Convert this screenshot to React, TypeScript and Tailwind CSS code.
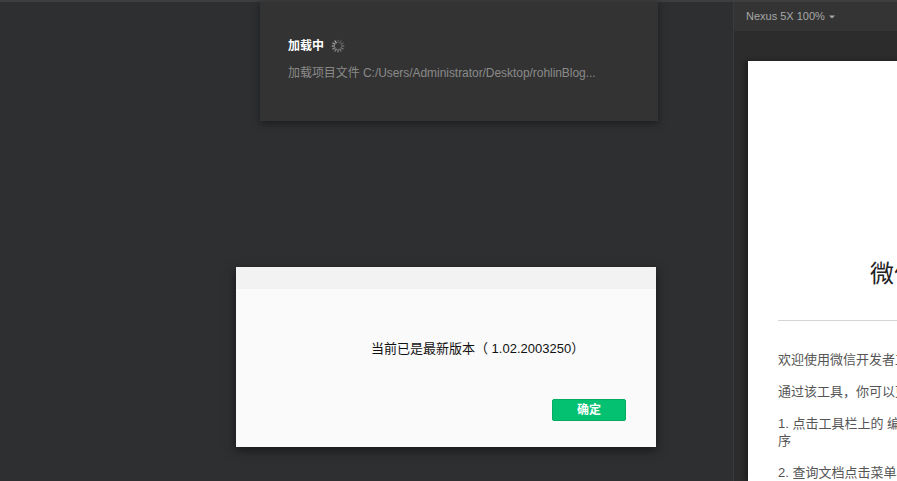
import React from "react";

function Spinner() {
  const ticks = Array.from({ length: 12 });
  return (
    <svg width="14" height="14" viewBox="0 0 14 14" className="ml-[7px]">
      {ticks.map((_, i) => (
        <rect
          key={i}
          x="6.3"
          y="0.5"
          width="1.4"
          height="3.6"
          rx="0.7"
          fill="#bdbdbd"
          opacity={0.25 + (i / 12) * 0.6}
          transform={`rotate(${i * 30} 7 7)`}
        />
      ))}
    </svg>
  );
}

export default function App() {
  const font = { fontFamily: '"Liberation Sans", "Noto Sans CJK SC", sans-serif' };
  return (
    <div className="w-[897px] h-[481px] overflow-hidden bg-[#2e2f31] flex flex-col" style={font}>
      <div className="h-[2px] bg-[#3d3e40] shrink-0" />
      <div className="flex flex-1 min-h-0">
        {/* main area */}
        <div className="relative w-[733px] shrink-0 h-full">
          {/* loading panel */}
          <div className="absolute left-[260px] top-0 w-[398px] h-[119px] bg-[#333333] shadow-[0_2px_8px_rgba(0,0,0,0.45)] pl-[28px] pt-[36px]">
            <div className="flex items-center h-[16px]">
              <span className="text-[12px] font-bold text-white leading-[16px]">加载中</span>
              <Spinner />
            </div>
            <div className="mt-[11px] text-[12px] tracking-[-0.05px] leading-[16px] text-[#8a8a8a]">
              加载项目文件 C:/Users/Administrator/Desktop/rohlinBlog...
            </div>
          </div>
          {/* dialog */}
          <div className="absolute left-[236px] top-[265px] w-[420px] h-[180px] bg-[#fafafa] shadow-[0_3px_10px_rgba(0,0,0,0.55)] flex flex-col">
            <div className="h-[22px] bg-[#f2f2f2] shrink-0" />
            <div className="pl-[135px] pt-[51px] text-[13px] leading-[18px] text-[#111]">
              当前已是最新版本（ 1.02.2003250）
            </div>
            <div className="flex justify-end pr-[30px] mt-[41px]">
              <button className="w-[74px] h-[22px] bg-[#03c171] rounded-[2px] border border-[#05ad62] text-white text-[12px] font-bold leading-[20px]">
                确定
              </button>
            </div>
          </div>
        </div>
        {/* simulator panel */}
        <div className="flex-1 h-full border-l border-[#3b3b3b] bg-[#2c2c2c] flex flex-col min-w-0">
          <div className="h-[29px] bg-[#343434] flex items-center pl-[12px] shrink-0">
            <span className="text-[11px] text-[#a8a8a8]">Nexus 5X 100%</span>
            <svg width="8" height="6" viewBox="0 0 8 6" className="ml-[3px] mt-[1px]">
              <path d="M1 1.5 L4 4.5 L7 1.5 Z" fill="#a8a8a8" />
            </svg>
          </div>
          <div className="flex-1 pl-[14px] pt-[30px] overflow-hidden">
            <div className="w-[412px] h-full bg-white shadow-[-3px_0_5px_rgba(0,0,0,0.35)] px-[30px] pt-[197px]">
              <div className="text-center text-[24px] leading-[32px] text-[#222]">微信开发者工具</div>
              <div className="mt-[30px] h-px bg-[#d5d5d5]" />
              <div className="mt-[30px] text-[13px] leading-[17px] text-[#555] flex flex-col gap-[15px]">
                <p>欢迎使用微信开发者工具，开发调试小程序</p>
                <p>通过该工具，你可以更方便地开发小程序</p>
                <p>1. 点击工具栏上的 编辑 按钮，即可开始编辑小程<br />序</p>
                <p>2. 查询文档点击菜单栏中的帮助</p>
              </div>
            </div>
          </div>
        </div>
      </div>
    </div>
  );
}
